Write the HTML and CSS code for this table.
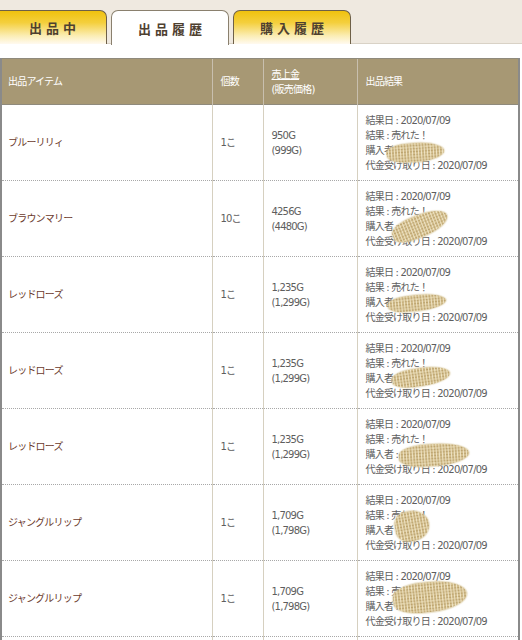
FILE: index.html
```html
<!DOCTYPE html>
<html lang="ja">
<head>
<meta charset="utf-8">
<link rel="stylesheet" href="styles.css">
</head>
<body>
<div class="tabbar">
  <div class="tab tab-first">出品中</div>
  <div class="tab tab-active">出品履歴</div>
  <div class="tab">購入履歴</div>
</div>
<div class="gap"></div>
<table class="hist">
  <colgroup>
    <col class="c1"><col class="c2"><col class="c3"><col class="c4">
  </colgroup>
  <thead>
    <tr>
      <th>出品アイテム</th>
      <th>個数</th>
      <th><span class="ul">売上金</span><br>(販売価格)</th>
      <th>出品結果</th>
    </tr>
  </thead>
  <tbody>
    <tr>
      <td class="name">ブルーリリィ</td><td>1こ</td><td>950G<br>(999G)</td>
      <td><div class="res">結果日 : 2020/07/09<br>結果 : 売れた！<br>購入者 : <br>代金受け取り日 : 2020/07/09<span class="blob" style="left:21px;top:30px;width:57px;height:19px;transform:rotate(-4deg)"></span></div></td>
    </tr>
    <tr>
      <td class="name">ブラウンマリー</td><td>10こ</td><td>4256G<br>(4480G)</td>
      <td><div class="res">結果日 : 2020/07/09<br>結果 : 売れた！<br>購入者 : <br>代金受け取り日 : 2020/07/09<span class="blob" style="left:25px;top:26px;width:58px;height:22px;transform:rotate(-22deg)"></span></div></td>
    </tr>
    <tr>
      <td class="name">レッドローズ</td><td>1こ</td><td>1,235G<br>(1,299G)</td>
      <td><div class="res">結果日 : 2020/07/09<br>結果 : 売れた！<br>購入者 : <br>代金受け取り日 : 2020/07/09<span class="blob" style="left:22px;top:30px;width:58px;height:16px;transform:rotate(-6deg)"></span></div></td>
    </tr>
    <tr>
      <td class="name">レッドローズ</td><td>1こ</td><td>1,235G<br>(1,299G)</td>
      <td><div class="res">結果日 : 2020/07/09<br>結果 : 売れた！<br>購入者 : <br>代金受け取り日 : 2020/07/09<span class="blob" style="left:26px;top:27px;width:58px;height:18px;transform:rotate(-8deg)"></span></div></td>
    </tr>
    <tr>
      <td class="name">レッドローズ</td><td>1こ</td><td>1,235G<br>(1,299G)</td>
      <td><div class="res">結果日 : 2020/07/09<br>結果 : 売れた！<br>購入者 : <br>代金受け取り日 : 2020/07/09<span class="blob" style="left:33px;top:27px;width:70px;height:22px;transform:rotate(-4deg)"></span></div></td>
    </tr>
    <tr>
      <td class="name">ジャングルリップ</td><td>1こ</td><td>1,709G<br>(1,798G)</td>
      <td><div class="res">結果日 : 2020/07/09<br>結果 : 売れた！<br>購入者 : <br>代金受け取り日 : 2020/07/09<span class="blob" style="left:29px;top:18px;width:34px;height:30px;transform:rotate(-10deg)"></span></div></td>
    </tr>
    <tr>
      <td class="name">ジャングルリップ</td><td>1こ</td><td>1,709G<br>(1,798G)</td>
      <td><div class="res">結果日 : 2020/07/09<br>結果 : 売れた！<br>購入者 : <br>代金受け取り日 : 2020/07/09<span class="blob" style="left:27px;top:13px;width:74px;height:30px;transform:rotate(-6deg)"></span></div></td>
    </tr>
    <tr class="empty">
      <td></td><td></td><td></td><td></td>
    </tr>
  </tbody>
</table>
</body>
</html>
```
FILE: styles.css
```css
html, body {
  margin: 0;
  padding: 0;
  background: #ffffff;
  font-family: "DejaVu Sans", "Noto Sans CJK JP", sans-serif;
  overflow: hidden;
}
.tabbar {
  background: #efe9e0;
  height: 44px;
  box-sizing: border-box;
  padding-top: 10px;
  display: flex;
  gap: 4px;
  border-bottom: 1px solid #d9d2c6;
  font-family: "Noto Sans CJK JP", sans-serif;
}
.tab {
  width: 118px;
  height: 34px;
  box-sizing: border-box;
  border: 1px solid #6e6048;
  border-bottom: none;
  border-radius: 7px 7px 0 0;
  background: linear-gradient(to bottom, #f0c10e 0%, #f4cf3c 35%, #fbedb4 75%, #fffaf0 100%);
  color: #4e4030;
  font-size: 13px;
  font-weight: bold;
  letter-spacing: 4px;
  display: flex;
  align-items: center;
  justify-content: center;
  padding-left: 4px;
}
.tab-first {
  width: 108px;
  margin-left: -1px;
  border-left: none;
  border-radius: 0 7px 0 0;
}
.tab-active {
  background: #ffffff;
  height: 35px;
  border-color: #8a806e;
  position: relative;
  z-index: 1;
}
.gap {
  height: 14px;
}
.hist {
  border-collapse: collapse;
  table-layout: fixed;
  width: 520px;
  font-size: 10px;
  letter-spacing: -0.8px;
  color: #5e5e5e;
  border-left: 2px solid #8a8a8a;
  border-right: 2px solid #8a8a8a;
}
.c1 { width: 211px; }
.c2 { width: 51px; }
.c3 { width: 94px; }
.c4 { width: 162px; }
.hist thead th {
  background: #a79874;
  color: #ffffff;
  font-weight: normal;
  text-align: left;
  height: 45px;
  padding: 0 8px;
  line-height: 15px;
  border-top: 1px solid #8f8a7c;
  border-left: 1px solid #c8bfae;
  vertical-align: middle;
}
.hist thead th:first-child { border-left: none; padding-left: 6px; }
.ul { text-decoration: underline; }
.hist tbody td {
  height: 75px;
  padding: 0 8px;
  line-height: 15px;
  vertical-align: middle;
  border-left: 1px solid #d6d0c0;
  border-top: 1px dotted #a8a8a8;
}
.hist tbody tr:first-child td { border-top: 1px solid #8f8a7c; }
.hist tbody td:first-child { border-left: none; padding-left: 6px; }
.hist tbody td.name { color: #6b3a2c; }
.res {
  position: relative;
}
.blob {
  position: absolute;
  border-radius: 40% 50% 50% 40%;
  background:
    radial-gradient(circle, rgba(248,240,215,0.75) 0.5px, transparent 1px) 0 0 / 3px 2px,
    radial-gradient(circle, rgba(160,130,70,0.45) 0.5px, transparent 1px) 1px 1px / 2px 3px,
    radial-gradient(circle, rgba(240,228,190,0.6) 0.7px, transparent 1.2px) 2px 1px / 5px 7px,
    #d2bd8c;
  box-shadow: 0 0 1px 1px rgba(220,205,165,0.6);
}
```
